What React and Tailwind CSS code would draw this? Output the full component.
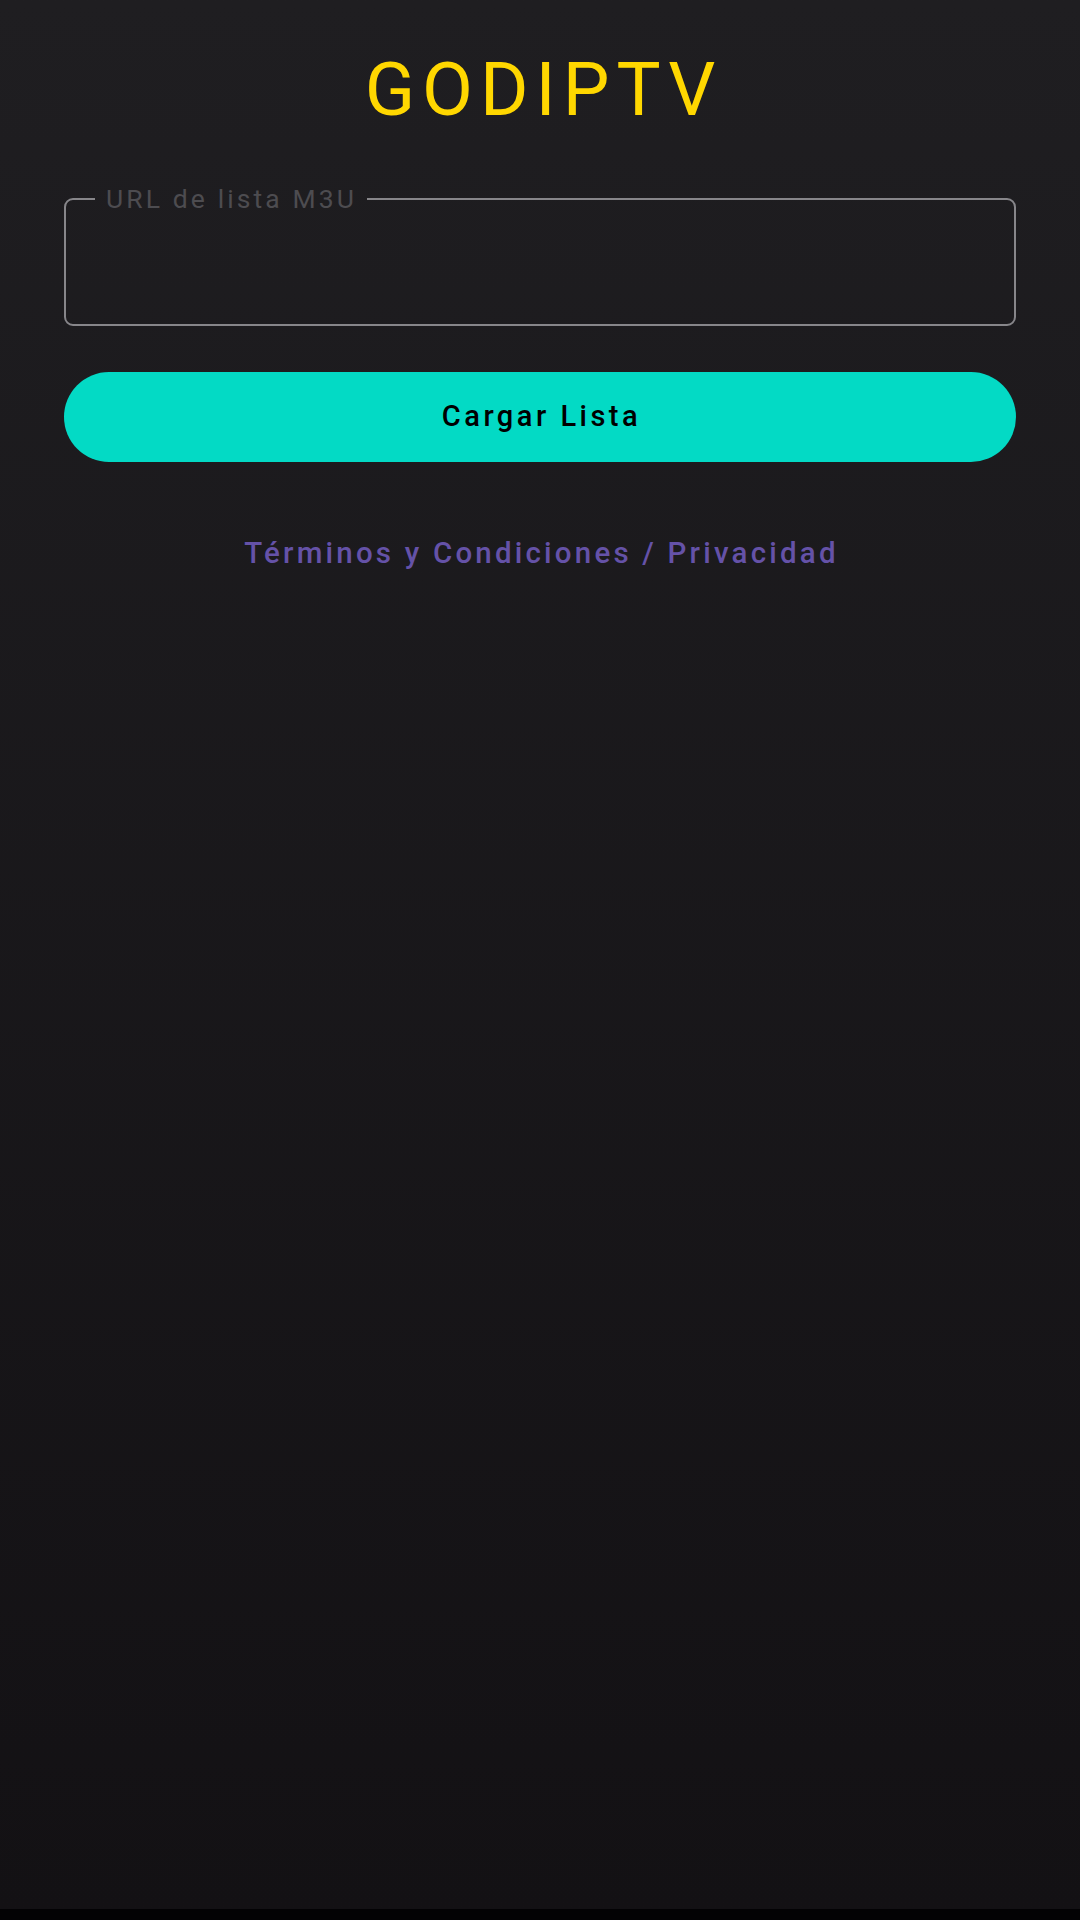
export default function App() {
  return (
    <div className="flex h-[1920px] w-[1080px] flex-col font-['Roboto',sans-serif]">
      <main className="flex flex-1 flex-col bg-gradient-to-b from-[#1f1e21] to-[#131114] px-16">
        <h1 className="pl-[7px] pt-[46px] text-center text-[74px] font-normal leading-[88px] tracking-[7px] text-[#ffd700]">
          GODIPTV
        </h1>

        <fieldset className="mt-[50px] rounded-[9px] border-2 border-[#87868a] p-0">
          <legend className="ml-[29px] pl-[11px] pr-[10px] text-[26.5px] leading-[30px] tracking-[3.1px] text-[#4d4c50]">
            URL de lista M3U
          </legend>
          <div className="h-[110px]" />
        </fieldset>

        <button className="mt-[46px] h-[90px] w-full rounded-full bg-[#03dac5] pl-[3px] text-[29px] font-medium tracking-[3.5px] text-black">
          Cargar Lista
        </button>

        <a className="mt-[73px] pl-[3px] text-center text-[29.5px] font-medium leading-[36px] tracking-[3.2px] text-[#6552a8]">
          Términos y Condiciones / Privacidad
        </a>
      </main>
      <div className="h-[11px] bg-[#030204]" />
    </div>
  );
}
